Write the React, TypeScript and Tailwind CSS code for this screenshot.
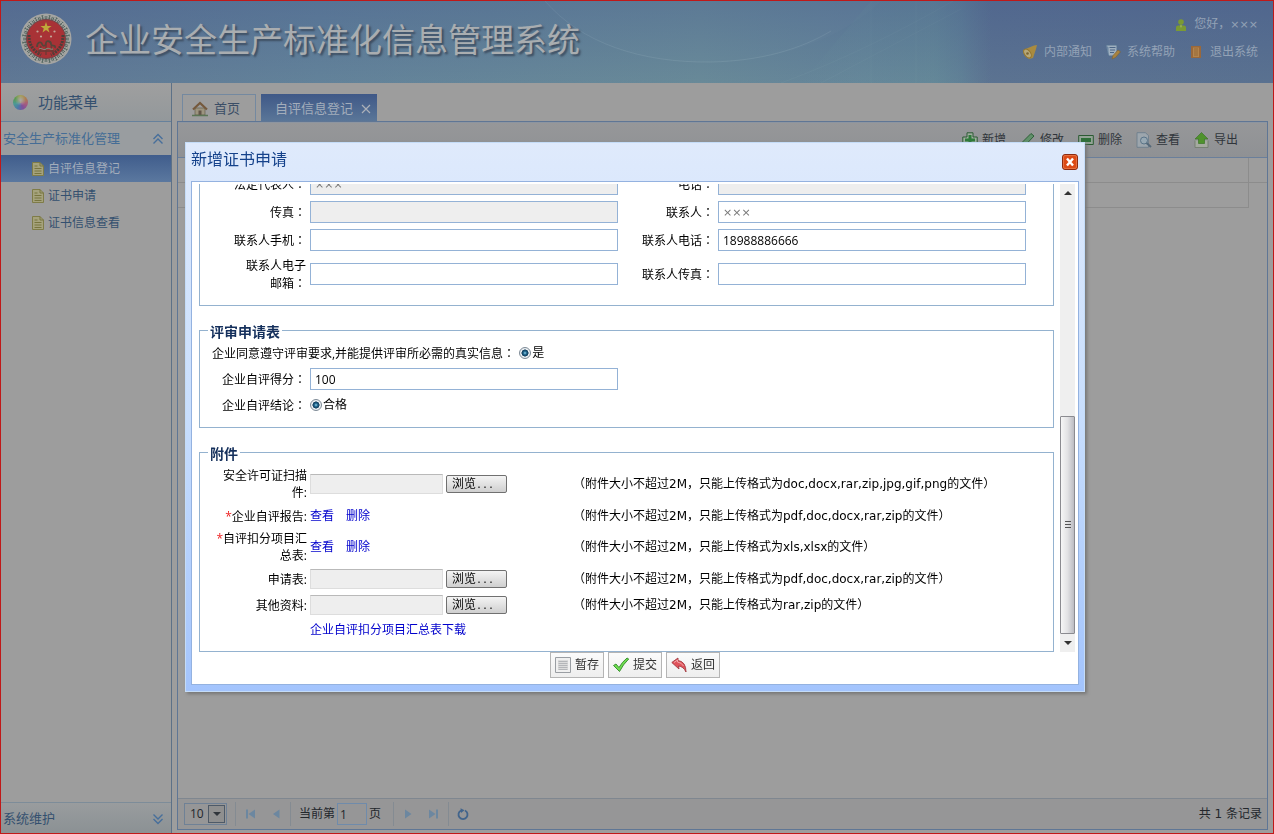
import type { ReactNode } from "react";

const sans = "font-['Open_Sans','Noto_Sans_CJK_SC',sans-serif]";
const wide = "font-['DejaVu_Sans','Noto_Sans_CJK_SC',sans-serif]";

/* Full-width colon set in the middle of its cell */
function Colon() {
  return <span className="font-['Noto_Sans_CJK_TC',sans-serif]">：</span>;
}

function Emblem() {
  const ticks = Array.from({ length: 40 }, (_, i) => i * 9);
  return (
    <svg className="size-[52px]" viewBox="0 0 52 52" aria-hidden="true">
      <circle cx="26" cy="26" r="25.5" fill="#a5a5a2" />
      {ticks.map((a) => (
        <path key={a} d={a % 2 ? "M25 2.5h2M26 2.5v4M25 5h2" : "M25.2 3v3h1.6V3"} stroke="#4a5f58" strokeWidth=".8" fill="none" transform={`rotate(${a} 26 26)`} />
      ))}
      <circle cx="26" cy="26" r="19.5" fill="#a83236" stroke="#6f4448" strokeWidth="1" />
      <path d="M26 9l1.4 4h4.2l-3.4 2.5 1.3 4L26 17l-3.5 2.5 1.3-4-3.4-2.5h4.2z" fill="#bfa83a" />
      <g fill="#c2a79a">
        <circle cx="17.500" cy="18.500" r="1.100" />
        <circle cx="34.500" cy="18.500" r="1.100" />
        <circle cx="21" cy="23.500" r="1.100" />
        <circle cx="31" cy="23.500" r="1.100" />
      </g>
      <path d="M9 22c0 9 3 15 12 20M43 22c0 9-3 15-12 20" stroke="#4b3f3a" strokeWidth="3" strokeDasharray="2 1" fill="none" />
      <path d="M17 34c0-5 4-6 5-3s4 2 4-1 5-2 5 1 5 0 4 4" stroke="#54463a" strokeWidth="1.800" fill="none" />
      <path d="M18 38h16M21 33l-2 8M26 31v11M31 33l2 8" stroke="#6a3a34" strokeWidth="1.300" fill="none" />
      <path d="M19 36c3-2 4 2 7 0s4 1 7 0" stroke="#7d9a83" strokeWidth="1" fill="none" />
    </svg>
  );
}

function HeaderArt() {
  return (
    <svg className="absolute inset-0 size-full" viewBox="0 0 1272 82" preserveAspectRatio="none" aria-hidden="true">
      <defs>
        <linearGradient id="glow" x1="0" x2="1">
          <stop offset="0" stopColor="#6b939b" stopOpacity="0" />
          <stop offset=".7" stopColor="#659099" stopOpacity=".6" />
          <stop offset=".85" stopColor="#5f8798" stopOpacity=".5" />
          <stop offset="1" stopColor="#5c7c92" stopOpacity="0" />
        </linearGradient>
      </defs>
      <path d="M544 0C580 42 640 62 710 61C790 60 850 30 880 0Z" fill="#7c9fb0" opacity=".1" />
      <path d="M544 0C580 42 640 62 710 61C760 60 800 48 830 30" stroke="#8aa6b2" strokeOpacity=".45" fill="none" />
      <path d="M800 82L870 0h120v82z" fill="url(#glow)" />
      <path d="M780 82C840 60 900 30 952 0M820 82L960 8M870 0v82M915 0v82" stroke="#83a5ad" strokeOpacity=".15" fill="none" />
    </svg>
  );
}

function UserIcon() {
  return (
    <svg className="size-3" viewBox="0 0 12 12" aria-hidden="true">
      <circle cx="6" cy="3" r="2.800" fill="#7b9a33" />
      <path d="M1 12V8.500q0-2 2-2h1.500L6 5l1.500 1.500H9q2 0 2 2V12z" fill="#7b9a33" />
      <path d="M5 6.500h2L6 9z" fill="#a3b86b" />
    </svg>
  );
}

function HornIcon() {
  return (
    <svg className="size-4" viewBox="0 0 16 16" aria-hidden="true">
      <path d="M1 6L12 1.500 15 1 14 5 11 14 7 15Q1 12 1 6z" fill="#a98b3f" />
      <ellipse cx="5.500" cy="9.500" rx="3" ry="5" transform="rotate(-35 5.500 9.500)" fill="#b7a878" stroke="#93752e" />
      <circle cx="5.500" cy="9.500" r="1.300" fill="#7a6433" />
    </svg>
  );
}

function HelpIcon() {
  return (
    <svg className="size-4" viewBox="0 0 16 16" aria-hidden="true">
      <path d="M1 1h11v11H3.500z" fill="#9fb0bf" stroke="#54708f" />
      <path d="M1 1l2.500 11V3.500z" fill="#6c86a2" />
      <path d="M4.500 3.500h6M5 6h5M5 8.500h4" stroke="#4b6586" />
      <path d="M7 15l1-3.500 5-5.500 2.500 1.800-5 5.700z" fill="#a88340" stroke="#7e6232" strokeWidth=".6" />
    </svg>
  );
}

function ExitIcon() {
  return (
    <svg className="h-3 w-4" viewBox="0 0 16 12" aria-hidden="true">
      <path d="M3 0h10v12H3z" fill="#9a683a" />
      <path d="M5 1.500h6V11H5z" fill="#b3854d" />
      <path d="M6 3h4M6 5h4M6 7h4M6 9h4" stroke="#8d6033" strokeWidth=".8" />
    </svg>
  );
}

function DocIcon() {
  return (
    <svg className="h-3.5 w-3" viewBox="0 0 12 14" aria-hidden="true">
      <path d="M.5.5h7.500l3.500 3.500v9.500H.5z" fill="#a5a27c" stroke="#7f7c48" />
      <path d="M8 .5V4h3.500M2.500 4h3M2.500 6.500h7M2.500 9h7M2.500 11.500h7" stroke="#77743f" fill="none" />
    </svg>
  );
}

function Chevrons({ down = false }: { down?: boolean }) {
  return (
    <svg className={down ? "size-3 rotate-180" : "size-3"} viewBox="0 0 12 12" fill="none" stroke="#476f9b" strokeWidth="1.400" aria-hidden="true">
      <path d="M1.500 6L6 1.500 10.500 6M1.500 10.500L6 6l4.500 4.500" />
    </svg>
  );
}

function HomeIcon() {
  return (
    <svg className="size-4" viewBox="0 0 16 16" aria-hidden="true">
      <path d="M3 7h10v7H3z" fill="#9c947f" stroke="#66604f" strokeWidth=".7" />
      <path d="M1 8.500L8 2l7 6.500" fill="none" stroke="#75593c" strokeWidth="2.200" />
      <path d="M6.500 9.500h3V14h-3z" fill="#63564a" />
      <path d="M0 14.500h16" stroke="#5b7555" strokeWidth="1.500" />
    </svg>
  );
}

function AddIcon() {
  return (
    <svg className="size-4" viewBox="0 0 16 16" aria-hidden="true">
      <path d="M5 .8h6V5h4.200v6H11v4.200H5V11H.8V5H5z" fill="#9fae9f" stroke="#2c5a34" />
      <path d="M8 3v10M3 8h10" stroke="#2e7a3a" strokeWidth="3" />
    </svg>
  );
}

function EditIcon() {
  return (
    <svg className="size-4" viewBox="0 0 16 16" aria-hidden="true">
      <path d="M1 15l1.500-5L11 1.500l3 2.500L5.500 13z" fill="#60906a" stroke="#2e6038" />
    </svg>
  );
}

function RemoveIcon() {
  return (
    <svg className="size-4" viewBox="0 0 16 16" aria-hidden="true">
      <path d="M.7 3.500h14.600v9H.7z" fill="#93a396" stroke="#2c5a34" />
      <path d="M3 6h10v4H3z" fill="#2f6f3a" />
    </svg>
  );
}

function ViewIcon() {
  return (
    <svg className="size-4" viewBox="0 0 16 16" aria-hidden="true">
      <path d="M1 .7h8.500l3 3v11.600H1z" fill="#9da6ad" stroke="#687b8b" strokeWidth=".8" />
      <circle cx="8" cy="8.500" r="3.500" fill="#97a8b3" stroke="#5a7488" />
      <path d="M10.500 11l4.500 4" stroke="#55697a" strokeWidth="2" />
    </svg>
  );
}

function ExportIcon() {
  return (
    <svg className="size-4" viewBox="0 0 16 16" aria-hidden="true">
      <path d="M1 8.500v7h13v-7" fill="#a5aaa0" stroke="#6d7a68" strokeWidth=".8" />
      <path d="M7.500.5L14 7h-3.500v4.500h-6V7H1z" fill="#4f922c" stroke="#3c7428" strokeWidth=".7" />
    </svg>
  );
}

function Sphere() {
  return (
    <span
      className="size-[15px] rounded-full bg-[radial-gradient(circle_at_50%_35%,#a8a4a8_0%,transparent_45%),conic-gradient(#a3a04c,#ad7d4c,#a85c7c,#80509c,#4c78a8,#4c9a94,#5a9b4c,#a3a04c)]"
      aria-hidden="true"
    />
  );
}

function Sep() {
  return <span className="h-6 w-px bg-[#848b92]" />;
}

function PageArrow({ kind }: { kind: "first" | "prev" | "next" | "last" }) {
  const art = {
    first: "M2 1.500h2v9H2zM11 1.500v9L4.500 6z",
    prev: "M9.500 1.500v9L3 6z",
    next: "M3 1.500v9L9.500 6z",
    last: "M8 1.500h2v9H8zM1 1.500v9L7.500 6z",
  }[kind];
  const names = { first: "首页", prev: "上一页", next: "下一页", last: "末页" };
  return (
    <button type="button" aria-label={names[kind]} className="flex size-4 items-center justify-center">
      <svg className="size-3" viewBox="0 0 12 12" aria-hidden="true">
        <path d={art} fill="#6c87a0" />
      </svg>
    </button>
  );
}

function SiteHeader() {
  const links = [
    { text: "内部通知", icon: <HornIcon /> },
    { text: "系统帮助", icon: <HelpIcon /> },
    { text: "退出系统", icon: <ExitIcon /> },
  ];
  return (
    <header className="relative flex h-[82px] shrink-0 justify-between bg-[linear-gradient(90deg,#5b7191_0%,#5f7e98_25%,#668796_55%,#618097_68%,#566b8d_78%,#54698c_100%)]">
      <HeaderArt />
      <div className="absolute inset-0 bg-linear-to-b from-[#4a6290]/40 to-[#7293a0]/20" />
      <div className="relative flex gap-[13px] pt-3 pl-[19px]">
        <Emblem />
        <h1 className="h-14 text-[33px] leading-[54px] whitespace-nowrap text-[#a9adb0] [text-shadow:2px_2px_2px_#3d4d60]">企业安全生产标准化信息管理系统</h1>
      </div>
      <div className="relative flex flex-col items-end gap-[11px] pt-[15px] pr-[15px] text-xs leading-4 text-[#93a2b6]">
        <p className="flex items-center gap-[7px]">
          <UserIcon />
          <span>
            您好，<span className={`${wide} text-[11px]`}>×××</span>
          </span>
        </p>
        <nav className="flex gap-[13px]">
          {links.map((l) => (
            <a key={l.text} href="#" className="flex items-center gap-1.5">
              {l.icon}
              {l.text}
            </a>
          ))}
        </nav>
      </div>
    </header>
  );
}

function Sidebar() {
  const items = ["自评信息登记", "证书申请", "证书信息查看"];
  return (
    <aside className="flex w-[171px] shrink-0 flex-col border-r border-[#5d7187] text-[#34506f]">
      <h2 className="flex h-[39px] items-center gap-2.5 border-b border-[#66819c] bg-linear-to-b from-[#9f9f9f] to-[#93989b] pl-3 text-[15px]">
        <Sphere />
        功能菜单
      </h2>
      <button type="button" className="flex h-[33px] items-center justify-between bg-[#999da0] pr-[7px] pl-0.5 text-[13px] text-[#456d96]">
        安全生产标准化管理
        <Chevrons />
      </button>
      <nav className="flex flex-1 flex-col text-xs">
        {items.map((t, i) => (
          <a
            key={t}
            href="#"
            className={
              i === 0
                ? "flex h-[27px] items-center gap-1 bg-linear-to-b from-[#405d8c] to-[#5b789f] pl-[31px] text-[#a3adbb]"
                : "flex h-[27px] items-center gap-1 pl-[31px]"
            }
          >
            <DocIcon />
            {t}
          </a>
        ))}
      </nav>
      <button type="button" className="flex h-[31px] items-center justify-between border-t border-[#7d8c99] bg-linear-to-b from-[#999c9e] to-[#8b9194] pt-px pr-[7px] pl-0.5 text-[13px]">
        系统维护
        <Chevrons down />
      </button>
    </aside>
  );
}

function Workspace() {
  const tools = [
    { text: "新增", icon: <AddIcon /> },
    { text: "修改", icon: <EditIcon /> },
    { text: "删除", icon: <RemoveIcon /> },
    { text: "查看", icon: <ViewIcon /> },
    { text: "导出", icon: <ExportIcon /> },
  ];
  return (
    <main className="flex min-w-0 flex-1 flex-col pt-[11px] pr-[5px] pb-[3px] pl-[5px]">
      <div className="flex gap-[5px] pl-[5px] text-[13px]">
        <button type="button" className="flex h-[27px] w-[74px] items-center gap-1.5 border border-b-0 border-[#7489a0] pt-0.5 pl-[9px] text-[#3b4e66]">
          <HomeIcon />
          首页
        </button>
        <div className="flex h-[27px] w-[116px] items-center justify-end gap-2 bg-linear-to-b from-[#3f5887] to-[#5a7698] pt-0.5 pr-1.5 text-[#a3adbb]">
          <button type="button">自评信息登记</button>
          <button type="button" aria-label="关闭标签">
            <svg className="size-2.5" viewBox="0 0 10 10" stroke="#abb0b8" strokeWidth="1.200" aria-hidden="true">
              <path d="M1 1l8 8M9 1L1 9" />
            </svg>
          </button>
        </div>
      </div>
      <section className="flex flex-1 flex-col border border-[#5f7695]">
        <div className="flex h-9 items-center justify-end gap-3.5 border-t border-b border-t-[#8d95a0] border-b-[#6a7f9b] bg-linear-to-b from-[#969799] to-[#8f9194] pr-[29px] text-xs text-[#30353b]">
          {tools.map((t) => (
            <button key={t.text} type="button" className="flex items-center gap-1 whitespace-nowrap">
              {t.icon}
              {t.text}
            </button>
          ))}
        </div>
        <div className="h-[25px] border-b border-[#8c8c8c]">
          <div className="mr-[18px] h-full border-r border-[#8c8c8c]" />
        </div>
        <div className="mr-[18px] h-[25px] border-r border-b border-[#8c8c8c]" />
        <div className="flex-1" />
        <footer className="flex h-[31px] items-center justify-between border-t border-[#7f8790] bg-[#969697] pr-[5px] pl-1.5 text-xs text-[#23272c]">
          <div className="flex items-center">
            <label className="relative mr-2 flex">
              <select aria-label="每页条数" className="h-[22px] w-[43px] appearance-none border border-[#6f8196] pl-[5px] text-xs">
                <option>10</option>
              </select>
              <span className="pointer-events-none absolute top-0.5 right-0.5 flex h-[18px] w-[17px] items-center justify-center border border-[#4e5a68] bg-[#8f8f8f]">
                <span className="border-4 border-b-0 border-transparent border-t-[#30353b]" />
              </span>
            </label>
            <Sep />
            <span className="mx-1.5 flex gap-2.5">
              <PageArrow kind="first" />
              <PageArrow kind="prev" />
            </span>
            <Sep />
            <label className="ml-2 flex items-center">
              当前第
              <input defaultValue="1" className="mx-0.5 h-[22px] w-[30px] border border-[#6f8bab] pl-0.5" />
              页
            </label>
            <span className="w-3" />
            <Sep />
            <span className="mx-1.5 flex gap-2.5">
              <PageArrow kind="next" />
              <PageArrow kind="last" />
            </span>
            <Sep />
            <button type="button" aria-label="刷新" className="ml-2">
              <svg className="size-3" viewBox="0 0 12 12" fill="none" aria-hidden="true">
                <path d="M4 2.500a4.500 4.500 0 1 0 4 0" stroke="#41648c" strokeWidth="1.800" />
                <path d="M3.500.3l4 2-3.500 2.700z" fill="#41648c" />
              </svg>
            </button>
          </div>
          <span className={wide}>共 1 条记录</span>
        </footer>
      </section>
    </main>
  );
}

function Field({ id, label, value = "", off = false, name = false }: { id: string; label: ReactNode; value?: string; off?: boolean; name?: boolean }) {
  return (
    <>
      <label htmlFor={id} className="justify-self-end pr-1 text-right leading-[17px] whitespace-nowrap">
        {label}
        <Colon />
      </label>
      <input
        id={id}
        defaultValue={value}
        readOnly={off}
        className={`h-[22px] w-full border border-[#94b2d6] px-1 ${off ? "bg-[#eeeeee]" : "bg-white"} ${name ? `${wide} text-[11px] text-[#777777]` : "text-black"}`}
      />
    </>
  );
}

const radio =
  "size-3 appearance-none rounded-full border border-[#7d8a96] bg-[radial-gradient(circle,#8fd3ee_0,#1b5f86_25%,#123c5c_46%,#eef2f5_54%,#dfe4e8_100%)]";

function Legend({ children }: { children: string }) {
  return <legend className="h-5 px-0.5 text-sm leading-[23px] font-bold text-[#15305c]">{children}</legend>;
}

function BrowseBox({ id }: { id: string }) {
  return (
    <div className="flex items-center gap-[3px]">
      <input id={id} readOnly className="h-5 w-[133px] border border-[#dddddd] border-t-[#b9b9b9] bg-[#eeeeee]" />
      <button type="button" className="h-[18px] w-[61px] rounded-[2px] border border-[#707070] bg-linear-to-b from-[#f4f4f4] to-[#cfcfcf] pl-[5px] text-left leading-4">
        浏览<span className="font-['Liberation_Mono',monospace] text-[10px]">...</span>
      </button>
    </div>
  );
}

function FileLinks() {
  return (
    <div className="flex gap-3 text-[#0000cc]">
      <a href="#">查看</a>
      <a href="#">删除</a>
    </div>
  );
}

function DialogForm() {
  const star = <span className="text-[#ee2222]">*</span>;
  const files = [
    { id: "f1", h: "h-10", label: <>安全许可证扫描<br />件:</>, types: "doc,docx,rar,zip,jpg,gif,png", box: true },
    { id: "f2", h: "h-6", label: <>{star}企业自评报告:</>, types: "pdf,doc,docx,rar,zip", box: false },
    { id: "f3", h: "h-[38px]", label: <>{star}自评扣分项目汇<br />总表:</>, types: "xls,xlsx", box: false },
    { id: "f4", h: "h-[26px]", label: <>申请表:</>, types: "pdf,doc,docx,rar,zip", box: true },
    { id: "f5", h: "h-[26px]", label: <>其他资料:</>, types: "rar,zip", box: true },
  ];
  const frame = "min-w-0 border border-[#94b2cf] pl-2";
  return (
    <div className="flex h-[468px] min-w-0 flex-1 flex-col justify-end gap-3.5 overflow-hidden pl-[7px]">
      <fieldset className={`${frame} shrink-0 pb-[11px]`}>
        <div className="grid grid-cols-[102px_308px_100px_308px] grid-rows-[28px_28px_28px_40px] items-center">
          <Field id="legal" label="法定代表人" value="×××" off name />
          <Field id="tel" label="电话" off />
          <Field id="fax" label="传真" off />
          <Field id="contact" label="联系人" value="×××" name />
          <Field id="mobile" label="联系人手机" />
          <Field id="ctel" label="联系人电话" value="18988886666" />
          <Field id="mail" label={<>联系人电子<br />邮箱</>} />
          <Field id="cfax" label="联系人传真" />
        </div>
      </fieldset>
      <fieldset className={`${frame} shrink-0 pb-[9px]`}>
        <Legend>评审申请表</Legend>
        <div className="flex h-[26px] items-center pl-1">
          <span>
            企业同意遵守评审要求,并能提供评审所必需的真实信息<Colon />
          </span>
          <label className="ml-1 flex items-center gap-px">
            <input type="radio" name="agree" defaultChecked className={radio} />是
          </label>
        </div>
        <div className="grid grid-cols-[102px_308px] grid-rows-[26px_26px] items-center">
          <Field id="score" label="企业自评得分" value="100" />
          <span className="justify-self-end pr-1">
            企业自评结论<Colon />
          </span>
          <label className="flex items-center gap-px">
            <input type="radio" name="result" defaultChecked className={radio} />
            合格
          </label>
        </div>
      </fieldset>
      <fieldset className={`${frame} shrink-0 pb-[9px]`}>
        <Legend>附件</Legend>
        <div className="pt-0.5">
          {files.map((f) => (
            <div key={f.id} className={`grid grid-cols-[102px_263px_auto] items-center ${f.h}`}>
              <label htmlFor={f.id} className="pr-[3px] text-right leading-[17px] whitespace-nowrap">
                {f.label}
              </label>
              {f.box ? <BrowseBox id={f.id} /> : <FileLinks />}
              <span className={`${wide} whitespace-nowrap`}>
                （附件大小不超过2M，只能上传格式为{f.types}的文件）
              </span>
            </div>
          ))}
          <a href="#" className="ml-[102px] flex h-6 items-center text-[#0000cc]">
            企业自评扣分项目汇总表下载
          </a>
        </div>
      </fieldset>
    </div>
  );
}

function ScrollTrack() {
  return (
    <div className="ml-1.5 flex w-[15px] shrink-0 flex-col items-center bg-[#efefef]" aria-hidden="true">
      <span className="mt-[7px] border-4 border-t-0 border-transparent border-b-[#333333]" />
      <span className="flex-1" />
      <span className="flex h-[218px] w-full flex-col items-center justify-center gap-px rounded-[1px] border border-[#8b8b90] bg-linear-to-r from-[#f6f6f6] via-[#e2e2e4] to-[#bcbcc2]">
        <span className="h-0.5 w-1.5 border-t border-[#555555]" />
        <span className="h-0.5 w-1.5 border-t border-[#555555]" />
        <span className="h-0.5 w-1.5 border-t border-[#555555]" />
      </span>
      <span className="my-[7px] border-4 border-b-0 border-transparent border-t-[#333333]" />
    </div>
  );
}

function CertDialog() {
  const action = "flex h-[26px] w-[54px] items-center justify-center gap-1 border border-[#b5b5b5] bg-linear-to-b from-[#fbfbfb] to-[#eeeeee] whitespace-nowrap text-[#333333]";
  return (
    <div className="fixed inset-0 flex items-center justify-center pr-1">
      <div
        role="dialog"
        aria-labelledby="dlg-title"
        className="w-[900px] border border-[#c4dcf8] bg-linear-to-b from-[#dfeafc] via-[#c8defd] to-[#a3c4fd] px-[5px] pb-1.5 shadow-[2px_2px_3px_#777777]"
      >
        <div className="flex h-[38px] items-center justify-between pr-px">
          <h2 id="dlg-title" className="-mt-1.5 text-base text-[#15428b]">
            新增证书申请
          </h2>
          <button type="button" aria-label="关闭" className="size-4">
            <svg className="size-4" viewBox="0 0 16 16" aria-hidden="true">
              <rect x=".5" y=".5" width="15" height="15" rx="2.500" fill="#dc4a16" stroke="#8c2a10" />
              <rect x="1.500" y="1.500" width="13" height="13" rx="1.500" fill="none" stroke="#ee8a5c" strokeOpacity=".6" />
              <path d="M5 4.500l6 7M11 4.500l-6 7" stroke="#fff" strokeWidth="2.400" />
            </svg>
          </button>
        </div>
        <div className="border border-[#94b2e0] bg-white pt-0.5 text-xs">
          <div className="flex pr-[3px]">
            <DialogForm />
            <ScrollTrack />
          </div>
          <div className="flex justify-center gap-1 pb-1.5">
            <button type="button" className={action}>
              <svg className="size-4" viewBox="0 0 16 16" aria-hidden="true">
                <path d="M.5.5h15v15H.5z" fill="#f0f0f0" stroke="#9a9ea3" />
                <path d="M3 3h10v10H3z" fill="#dcdcdc" />
                <path d="M3.500 4.500h9M3.500 6.500h9M3.500 8.500h9M3.500 10.500h9M3.500 12.500h9" stroke="#a9acb0" strokeWidth=".8" />
              </svg>
              暂存
            </button>
            <button type="button" className={action}>
              <svg className="size-4" viewBox="0 0 16 16" aria-hidden="true">
                <path d="M.5 8.500L3 7l3 3.500Q9 5 14 1l1.700 1Q10 7.500 6.500 14.500z" fill="#6fdc50" stroke="#2f8a26" strokeWidth=".9" />
              </svg>
              提交
            </button>
            <button type="button" className={action}>
              <svg className="size-4" viewBox="0 0 16 16" aria-hidden="true">
                <path d="M.8 5.500L7 1v2.500q8 1 8 11.500Q12.500 9.500 7.500 9L8 12z" fill="#e0535b" stroke="#a33a40" strokeWidth=".9" />
                <path d="M3 5.500L6.500 3v2q4 .5 6 4" stroke="#f2a6a9" fill="none" />
              </svg>
              返回
            </button>
          </div>
        </div>
      </div>
    </div>
  );
}

export default function App() {
  return (
    <div className={`flex min-h-screen flex-col border border-[#c01818] bg-[#9d9d9d] ${sans}`}>
      <SiteHeader />
      <div className="flex flex-1">
        <Sidebar />
        <Workspace />
      </div>
      <CertDialog />
    </div>
  );
}
